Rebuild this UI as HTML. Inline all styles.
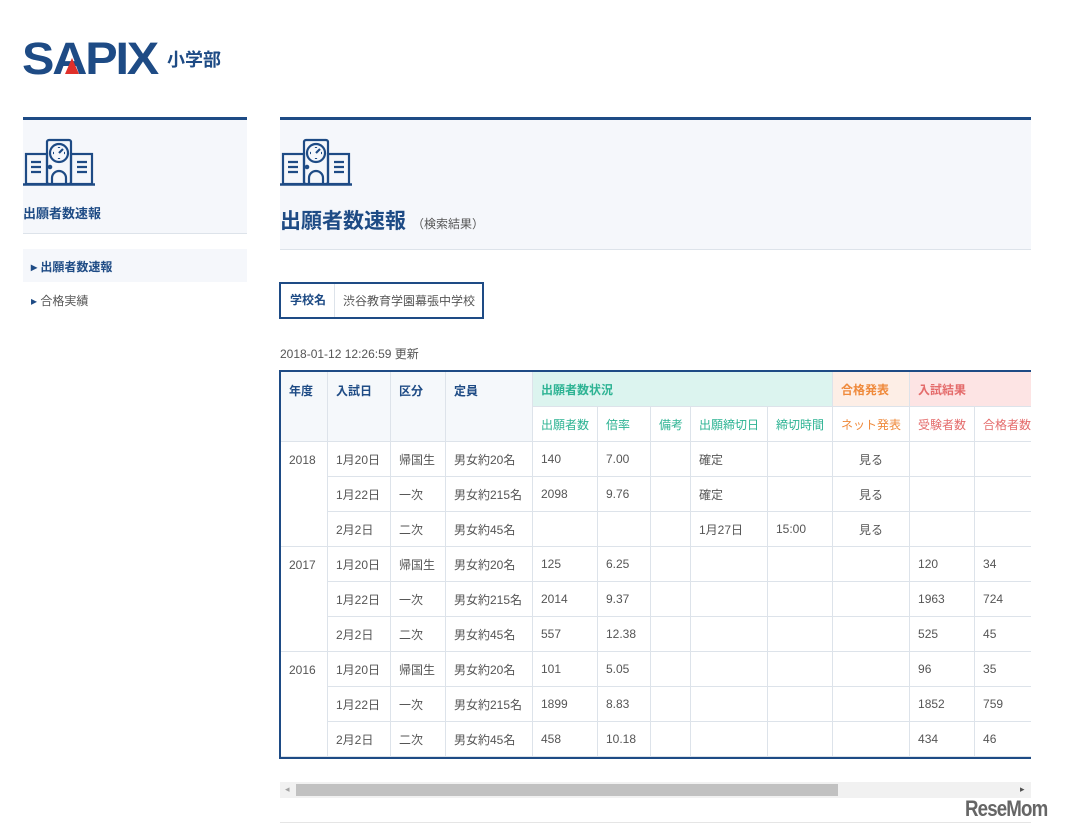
<!DOCTYPE html>
<html><head><meta charset="utf-8"><style>
*{margin:0;padding:0;box-sizing:border-box}
body{width:1076px;height:832px;background:#fff;font-family:"Liberation Sans","Noto Sans CJK JP",sans-serif;position:relative;overflow:hidden;color:#555}
.abs{position:absolute}
.navy{color:#1e4b85}
.panel{background:#f5f7fb;border-top:3px solid #1e4b85;border-bottom:1px solid #dde3ea}
table{border-collapse:collapse;table-layout:fixed;font-size:12px}
td,th{border:1px solid #dde3ea;height:35px;padding:0 8px;text-align:left;white-space:nowrap;font-weight:normal;color:#555}
th{vertical-align:top;padding-top:10px;font-weight:bold;color:#1e4b85}
.lh{background:#f5f8fb}
.g{color:#2db393}.o{color:#ef8a3c}.r{color:#e46b6b}
th.g,th.o,th.r{font-weight:normal;vertical-align:middle;padding-top:0}
th.gb{background:#dcf4ef;color:#2db393;vertical-align:middle;padding-top:0}
th.ob{background:#fdeee6;color:#ef8a3c;vertical-align:middle;padding-top:0}
th.rb{background:#fde4e4;color:#e46b6b;vertical-align:middle;padding-top:0}
.c{text-align:center}
</style></head><body>

<div class="abs" style="left:22px;top:33px;font:900 45px 'Liberation Sans',sans-serif;color:#1e4b85;letter-spacing:-2px;transform:scaleX(1.08);transform-origin:left">SAPIX</div>
<div class="abs" style="left:65px;top:58px;width:0;height:0;border-left:7px solid transparent;border-right:7px solid transparent;border-bottom:16px solid #e0302a"></div>
<div class="abs navy" style="left:167px;top:46px;font-size:18px;font-weight:bold">小学部</div>

<svg width="0" height="0" style="position:absolute"><defs><g id="ic" fill="none" stroke="#1e4b85" stroke-width="2.2">
<rect x="24" y="3" width="24" height="44" rx="2"/><rect x="3" y="17" width="21" height="30"/><rect x="48" y="17" width="21" height="30"/>
<circle cx="36" cy="16" r="9"/><path d="M36 16l4-4M36 10v1M30 16h1M42 16h-1M36 22v-1"/>
<path d="M29 47v-6a7 7 0 0 1 14 0v6"/><path d="M8 25h10M8 30h10M8 35h10M54 25h10M54 30h10M54 35h10"/>
<circle cx="27" cy="30" r="1.2" fill="#1e4b85"/><path d="M0 47.5h72" stroke-width="2.6"/></g></defs></svg>

<div class="abs panel" style="left:23px;top:117px;width:224px;height:117px"></div>
<svg class="abs" style="left:23px;top:137px" width="72" height="50"><use href="#ic"/></svg>
<div class="abs navy" style="left:23px;top:203px;font-size:13px;font-weight:bold">出願者数速報</div>
<div class="abs" style="left:23px;top:249px;width:224px;height:33px;background:#f5f7fb"></div>
<div class="abs navy" style="left:31px;top:258px;font-size:12px;font-weight:bold">▸ 出願者数速報</div>
<div class="abs navy" style="left:31px;top:292px;font-size:12px">▸ <span style="color:#555">合格実績</span></div>

<div class="abs panel" style="left:280px;top:117px;width:751px;height:133px"></div>
<svg class="abs" style="left:280px;top:137px" width="72" height="50"><use href="#ic"/></svg>
<div class="abs navy" style="left:280px;top:205px;font-size:21px;font-weight:bold">出願者数速報<span style="font-size:12px;font-weight:normal;color:#555;margin-left:6px">（検索結果）</span></div>

<div class="abs" style="left:279px;top:282px;width:205px;height:37px;border:2px solid #1e4b85;font-size:12px;display:flex;align-items:center">
<div class="navy" style="font-weight:bold;width:54px;padding-left:9px;height:100%;line-height:33px;border-right:1px solid #dde3ea">学校名</div>
<div style="padding-left:8px">渋谷教育学園幕張中学校</div></div>

<div class="abs" style="left:280px;top:345px;font-size:12px">2018-01-12 12:26:59 更新</div>

<div class="abs" style="left:279px;top:370px;width:752px;height:389px;overflow:hidden;border-top:2px solid #1e4b85;border-bottom:2px solid #1e4b85;border-left:2px solid #1e4b85">
<table style="width:820px;margin:-1px 0 0 -1px">
<colgroup><col style="width:47px"><col style="width:63px"><col style="width:55px"><col style="width:87px"><col style="width:65px"><col style="width:53px"><col style="width:40px"><col style="width:77px"><col style="width:65px"><col style="width:77px"><col style="width:65px"><col style="width:126px"></colgroup>
<tr><th rowspan="2" class="lh">年度</th><th rowspan="2" class="lh">入試日</th><th rowspan="2" class="lh">区分</th><th rowspan="2" class="lh">定員</th><th colspan="5" class="gb">出願者数状況</th><th class="ob">合格発表</th><th colspan="2" class="rb">入試結果</th></tr>
<tr><th class="g">出願者数</th><th class="g">倍率</th><th class="g">備考</th><th class="g">出願締切日</th><th class="g">締切時間</th><th class="o">ネット発表</th><th class="r">受験者数</th><th class="r">合格者数</th></tr>
<tr><td rowspan="3" style="vertical-align:top;padding-top:11px">2018</td><td>1月20日</td><td>帰国生</td><td>男女約20名</td><td>140</td><td>7.00</td><td></td><td>確定</td><td></td><td class="c">見る</td><td></td><td></td></tr>
<tr><td>1月22日</td><td>一次</td><td>男女約215名</td><td>2098</td><td>9.76</td><td></td><td>確定</td><td></td><td class="c">見る</td><td></td><td></td></tr>
<tr><td>2月2日</td><td>二次</td><td>男女約45名</td><td></td><td></td><td></td><td>1月27日</td><td>15:00</td><td class="c">見る</td><td></td><td></td></tr>
<tr><td rowspan="3" style="vertical-align:top;padding-top:11px">2017</td><td>1月20日</td><td>帰国生</td><td>男女約20名</td><td>125</td><td>6.25</td><td></td><td></td><td></td><td></td><td>120</td><td>34</td></tr>
<tr><td>1月22日</td><td>一次</td><td>男女約215名</td><td>2014</td><td>9.37</td><td></td><td></td><td></td><td></td><td>1963</td><td>724</td></tr>
<tr><td>2月2日</td><td>二次</td><td>男女約45名</td><td>557</td><td>12.38</td><td></td><td></td><td></td><td></td><td>525</td><td>45</td></tr>
<tr><td rowspan="3" style="vertical-align:top;padding-top:11px">2016</td><td>1月20日</td><td>帰国生</td><td>男女約20名</td><td>101</td><td>5.05</td><td></td><td></td><td></td><td></td><td>96</td><td>35</td></tr>
<tr><td>1月22日</td><td>一次</td><td>男女約215名</td><td>1899</td><td>8.83</td><td></td><td></td><td></td><td></td><td>1852</td><td>759</td></tr>
<tr><td>2月2日</td><td>二次</td><td>男女約45名</td><td>458</td><td>10.18</td><td></td><td></td><td></td><td></td><td>434</td><td>46</td></tr>
</table></div>

<div class="abs" style="left:280px;top:782px;width:751px;height:16px;background:#f1f1f1"></div>
<div class="abs" style="left:296px;top:784px;width:542px;height:12px;background:#c1c1c1"></div>
<div class="abs" style="left:285px;top:784px;font-size:9px;color:#a3a3a3">◂</div>
<div class="abs" style="left:1020px;top:784px;font-size:9px;color:#505050">▸</div>
<div class="abs" style="left:280px;top:822px;width:751px;height:1px;background:#e5e5e5"></div>
<div class="abs" style="left:965px;top:796px;font:bold 22px 'Liberation Sans',sans-serif;color:#666;letter-spacing:-1px;transform:scaleX(.85);transform-origin:left">ReseMom</div>
</body></html>
